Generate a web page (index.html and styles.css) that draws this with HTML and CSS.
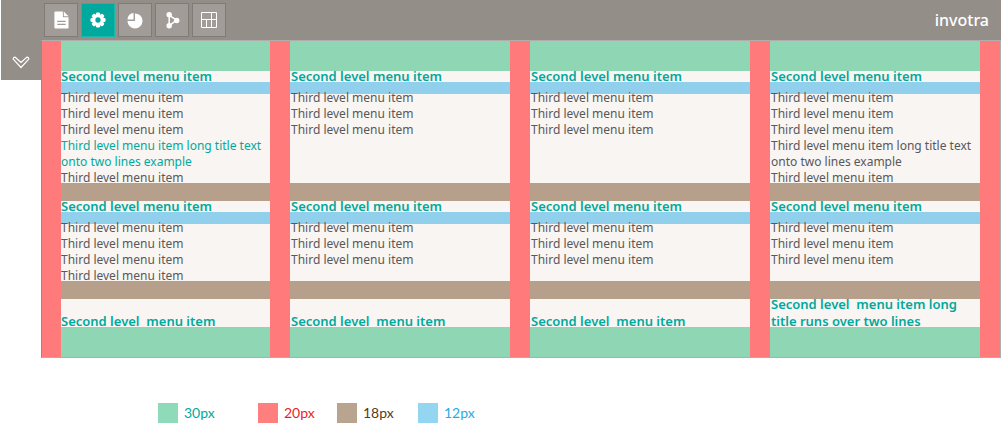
FILE: index.html
```html
<!DOCTYPE html>
<html lang="en">
<head>
<meta charset="utf-8">
<title>Invotra mega menu</title>
<link rel="stylesheet" href="styles.css">
</head>
<body>
<header class="topbar">
  <nav class="tools" aria-label="Tools">
    <button class="tool" type="button" aria-label="Content"><svg viewBox="0 0 34 34"><path fill="#fff" d="M11 8h8v6h6v11q0 1-1 1H11q-1 0-1-1V9q0-1 1-1zM20 8l5 5h-5z"/><path stroke="#a19c98" stroke-width="1.4" d="M13 18.500h9M13 21.700h9"/></svg></button>
    <button class="tool tool-active" type="button" aria-label="Settings"><svg viewBox="0 0 34 34"><g transform="translate(17 17)" fill="#fff"><circle r="6.200"/><g id="teeth"><rect x="-2.200" y="-8" width="4.400" height="16" rx="1.300"/><rect x="-8" y="-2.200" width="16" height="4.400" rx="1.300"/></g><use href="#teeth" transform="rotate(45)"/><circle r="2.800" fill="#00a99d"/></g></svg></button>
    <button class="tool" type="button" aria-label="Reports"><svg viewBox="0 0 34 34"><path fill="#fff" d="M17 10v8H9a8 8 0 1 0 8-8z"/><path fill="#fff" d="M15.500 9.500v7H9a7 7 0 0 1 6.500-7z"/></svg></button>
    <button class="tool" type="button" aria-label="Workflow"><svg viewBox="0 0 34 34"><path fill="none" stroke="#fff" stroke-width="1.600" d="M14 12v11l8-6z"/><g fill="#fff"><circle cx="14" cy="11.500" r="2.900"/><circle cx="22" cy="17.500" r="2.900"/><circle cx="14" cy="23" r="2.900"/></g></svg></button>
    <button class="tool" type="button" aria-label="Layout"><svg viewBox="0 0 32 32"><path fill="none" stroke="#fff" d="M8.500 8.500h15v15h-15zM8.500 15.500h15M18.500 8.500v15M13.500 15.500v8"/></svg></button>
  </nav>
  <a class="logo" href="#">invotra</a>
</header>
<main class="workspace">
  <aside class="rail">
    <button class="expand" type="button" aria-label="Toggle menu"><svg viewBox="0 0 18 13"><path fill="none" stroke="#fff" stroke-width="1.200" stroke-linejoin="round" d="M3.200 1.200 9 6.500l5.800-5.300q2-.2 2 2L9 11.500 1.200 3.200q0-2.200 2-2z"/></svg></button>
  </aside>
  <nav class="menu" aria-label="Main menu">
    <section class="column">
      <h2 class="heading"><a href="#">Second level menu item</a></h2>
      <ul class="links">
        <li><a href="#">Third level menu item</a></li>
        <li><a href="#">Third level menu item</a></li>
        <li><a href="#">Third level menu item</a></li>
        <li><a class="current" href="#">Third level menu item long title text onto two lines example</a></li>
        <li><a href="#">Third level menu item</a></li>
      </ul>
      <h2 class="heading"><a href="#">Second level menu item</a></h2>
      <ul class="links">
        <li><a href="#">Third level menu item</a></li>
        <li><a href="#">Third level menu item</a></li>
        <li><a href="#">Third level menu item</a></li>
        <li><a href="#">Third level menu item</a></li>
      </ul>
      <h2 class="heading"><a href="#">Second level  menu item</a></h2>
    </section>
    <section class="column">
      <h2 class="heading"><a href="#">Second level menu item</a></h2>
      <ul class="links">
        <li><a href="#">Third level menu item</a></li>
        <li><a href="#">Third level menu item</a></li>
        <li><a href="#">Third level menu item</a></li>
      </ul>
      <h2 class="heading"><a href="#">Second level menu item</a></h2>
      <ul class="links">
        <li><a href="#">Third level menu item</a></li>
        <li><a href="#">Third level menu item</a></li>
        <li><a href="#">Third level menu item</a></li>
      </ul>
      <h2 class="heading"><a href="#">Second level  menu item</a></h2>
    </section>
    <section class="column">
      <h2 class="heading"><a href="#">Second level menu item</a></h2>
      <ul class="links">
        <li><a href="#">Third level menu item</a></li>
        <li><a href="#">Third level menu item</a></li>
        <li><a href="#">Third level menu item</a></li>
      </ul>
      <h2 class="heading"><a href="#">Second level menu item</a></h2>
      <ul class="links">
        <li><a href="#">Third level menu item</a></li>
        <li><a href="#">Third level menu item</a></li>
        <li><a href="#">Third level menu item</a></li>
      </ul>
      <h2 class="heading"><a href="#">Second level  menu item</a></h2>
    </section>
    <section class="column">
      <h2 class="heading"><a href="#">Second level menu item</a></h2>
      <ul class="links">
        <li><a href="#">Third level menu item</a></li>
        <li><a href="#">Third level menu item</a></li>
        <li><a href="#">Third level menu item</a></li>
        <li><a href="#">Third level menu item long title text onto two lines example</a></li>
        <li><a href="#">Third level menu item</a></li>
      </ul>
      <h2 class="heading"><a href="#">Second level menu item</a></h2>
      <ul class="links">
        <li><a href="#">Third level menu item</a></li>
        <li><a href="#">Third level menu item</a></li>
        <li><a href="#">Third level menu item</a></li>
      </ul>
      <h2 class="heading"><a href="#">Second level  menu item long title runs over two lines</a></h2>
    </section>
  </nav>
</main>
<ul class="legend">
  <li class="key key-green">30px</li>
  <li class="key key-red">20px</li>
  <li class="key key-brown">18px</li>
  <li class="key key-blue">12px</li>
</ul>
</body>
</html>
```
FILE: styles.css
```css
* { box-sizing: border-box; }

body {
  margin: 0;
  padding-left: 1px;
  background: #fff;
  font-family: "Noto Sans", "Open Sans", sans-serif;
}

a { color: inherit; text-decoration: none; }
ul { margin: 0; padding: 0; list-style: none; }

.topbar {
  display: flex;
  justify-content: space-between;
  align-items: center;
  height: 40px;
  padding: 0 12px 0 43px;
  background: #948e89;
}

.tools { display: flex; gap: 3px; }

.tool {
  width: 34px;
  height: 34px;
  padding: 0;
  border: 1px solid #807b77;
  background: #a19c98;
}
.tool-active { border-color: #18b8ab; background: #00a99d; }
.tool svg { display: block; width: 32px; height: 32px; }

.logo {
  color: #fff;
  font-size: 16px;
  font-weight: 500;
  line-height: 20px;
}

.workspace { display: flex; align-items: flex-start; }

.rail {
  display: flex;
  justify-content: center;
  flex: 0 0 40px;
  height: 40px;
  padding-top: 16px;
  background: #948e89;
}
.expand {
  width: 18px;
  height: 13px;
  padding: 0;
  border: 0;
  background: none;
}
.expand svg { display: block; }

.menu {
  flex: 1;
  display: grid;
  grid-template-columns: 228fr 240fr 240fr 250fr;
  grid-template-rows: repeat(5, auto);
  border: 1px solid #b0aeac;
  border-left-color: #d3706e;
  background: #f9f5f2;
}

.column {
  display: grid;
  grid-row: 1 / -1;
  grid-template-rows: subgrid;
  border-left: 20px solid #ff7b7b;
}
.column:first-child { border-left-width: 19px; }
.column:last-child { border-right: 20px solid #ff7b7b; }

.heading {
  display: flex;
  align-items: flex-end;
  margin: 0;
  border-bottom: 12px solid #91d0ed;
  color: #00a99d;
  font-size: 13px;
  font-weight: 600;
  line-height: 17px;
  white-space: pre-wrap;
}
.heading a { margin: -3px 0; }
.heading:first-child { border-top: 30px solid #8ed6b4; }
.heading:last-child { border-bottom: 30px solid #8ed6b4; }

.links {
  display: flex;
  flex-direction: column;
  border-bottom: 18px solid #b7a08b;
  color: #58585a;
  font-size: 12px;
  line-height: 16px;
}
.links li:first-child { margin-top: -4px; }
.links li:last-child { margin-bottom: -3px; }
.current { color: #00a99d; }

.column + .column .heading,
.column + .column .links { padding-left: 1px; }

.legend {
  display: grid;
  grid-template-columns: 100px 79px 81px auto;
  padding: 45px 0 0 157px;
  font-family: Lato, sans-serif;
  font-size: 14px;
  line-height: 20px;
}
.key { display: flex; gap: 6px; }
.key::before {
  content: "";
  width: 20px;
  height: 20px;
  background: var(--swatch);
}
.key-green { --swatch: #8fdab8; color: #00a99d; }
.key-red { --swatch: #ff7e7e; color: #ed1c24; }
.key-brown { --swatch: #b9a48f; color: #603913; }
.key-blue { --swatch: #94d5f1; color: #29abe2; }
```
